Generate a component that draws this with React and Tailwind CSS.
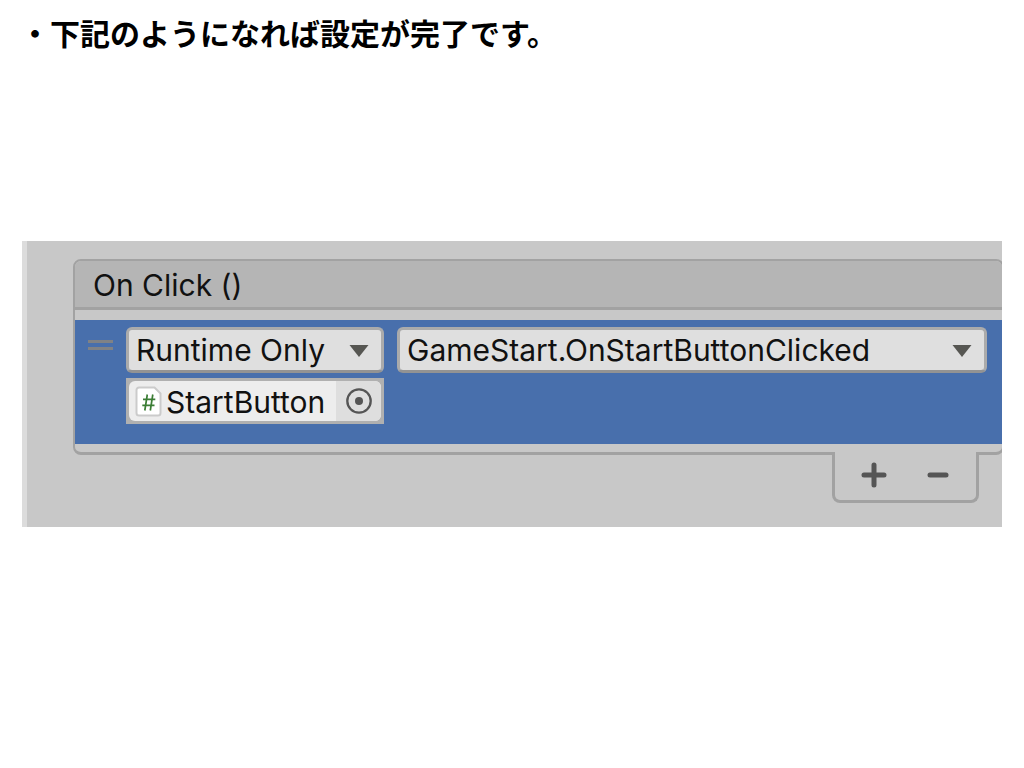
import { useState } from 'react';

function Dropdown({ label, options, className }) {
  return (
    <div className={`relative ${className}`}>
      <select
        aria-label={label}
        className="h-[46px] w-full appearance-none rounded-md border-[3px] border-[#ababab] border-b-[#939393] bg-[#dfdfdf] pr-12 pb-px pl-[7px] text-[30px] leading-9 text-[#111111]"
      >
        {options.map((option) => (
          <option key={option}>{option}</option>
        ))}
      </select>
      <svg
        viewBox="0 0 20 12"
        className="pointer-events-none absolute top-[18px] right-[15px] h-3 w-5"
        aria-hidden="true"
      >
        <path d="M0.500 0H19.500L10 12Z" fill="#565652" />
      </svg>
    </div>
  );
}

function ScriptIcon() {
  return (
    <svg viewBox="0 0 28 32" className="h-8 w-7 shrink-0" aria-hidden="true">
      <path
        d="M4 2.500H19.500L25.500 8.500V28A2.500 2.500 0 0 1 23 30.500H4A2.500 2.500 0 0 1 1.500 28V5A2.500 2.500 0 0 1 4 2.500Z"
        fill="#ffffff"
        stroke="#cbcbcb"
        strokeWidth="2"
      />
      <path
        d="M12.300 9.500L9.800 25.500M17.800 9.500L15.300 25.500M8 14.300H20.300M7.300 20.300H19.500"
        fill="none"
        stroke="#3b7d35"
        strokeWidth="1.700"
      />
    </svg>
  );
}

function ObjectField() {
  const [value, setValue] = useState('StartButton');
  return (
    <div className="h-[46px] w-[258px] bg-[#b0b0b0] p-[3px]">
      <div className="flex h-full overflow-hidden rounded-md bg-[#ededed]">
        <div className="flex min-w-0 flex-1 items-center gap-[3px] pl-1.5">
          <ScriptIcon />
          <input
            aria-label="Target object"
            value={value}
            onChange={(event) => setValue(event.target.value)}
            className="h-10 w-full min-w-0 bg-transparent pt-0.5 text-[30px] leading-9 text-[#111111] outline-none"
          />
        </div>
        <button
          type="button"
          aria-label="Select object"
          className="flex w-[45px] items-center justify-center bg-[#dedede]"
        >
          <svg viewBox="0 0 28 28" className="size-7" aria-hidden="true">
            <circle cx="14" cy="14" r="11.700" fill="none" stroke="#555555" strokeWidth="2.300" />
            <circle cx="14" cy="14" r="4" fill="#555555" />
          </svg>
        </button>
      </div>
    </div>
  );
}

function ListFooter() {
  return (
    <div className="relative -mt-[3px] mr-[25px] ml-auto flex h-[51px] w-[147px] rounded-b-lg border-x-[3px] border-b-[3px] border-[#a2a2a2] bg-[#c8c8c8] pb-0.5 pl-[7px]">
      <button type="button" aria-label="Add" className="flex w-16 items-center justify-center">
        <svg viewBox="0 0 26 26" className="size-[26px]" aria-hidden="true">
          <path d="M13 3V23M3 13H23" stroke="#555555" strokeWidth="5" strokeLinecap="round" />
        </svg>
      </button>
      <button type="button" aria-label="Remove" className="flex w-16 items-center justify-center">
        <svg viewBox="0 0 26 26" className="size-[26px]" aria-hidden="true">
          <path d="M5 13H21" stroke="#555555" strokeWidth="5" strokeLinecap="round" />
        </svg>
      </button>
    </div>
  );
}

export default function App() {
  return (
    <main className="grid min-h-screen grid-rows-[1fr_auto_1fr] bg-white px-[22px] font-['Inter',sans-serif] [font-optical-sizing:none]">
      <h1 className="-ml-0.5 pt-2.5 font-['Noto_Sans_CJK_JP',sans-serif] text-[30px] leading-[44px] font-bold text-black">
        ・下記のようになれば設定が完了です。
      </h1>
      <section
        aria-labelledby="event-name"
        className="overflow-hidden border-l-[5px] border-[#dcdcdc] bg-[#c8c8c8] pt-[18px] pb-6 pl-[46px]"
      >
        <div className="-mr-0.5">
          <div className="overflow-hidden rounded-lg border-2 border-b-[3px] border-[#a2a2a2] bg-[#c8c8c8]">
            <h2
              id="event-name"
              className="h-[49px] border-b-[3px] border-[#a2a2a2] bg-[#b5b5b5] pl-[18px] text-[30px] leading-[48px] text-[#111111]"
            >
              On Click ()
            </h2>
            <div className="mt-2.5 mb-2 flex h-[124px] bg-[#486fac] pt-[7px] pr-[15px] pl-[13px]">
              <div className="mt-[13px] h-2.5 w-[25px] shrink-0 border-y-[3px] border-[#808285]" />
              <div className="ml-[13px] min-w-0 flex-1">
                <div className="flex gap-[13px]">
                  <Dropdown
                    label="Call state"
                    options={['Runtime Only', 'Editor And Runtime', 'Off']}
                    className="w-[258px] shrink-0"
                  />
                  <Dropdown
                    label="Function"
                    options={['GameStart.OnStartButtonClicked', 'No Function']}
                    className="min-w-0 flex-1"
                  />
                </div>
                <div className="mt-[5px]">
                  <ObjectField />
                </div>
              </div>
            </div>
          </div>
          <ListFooter />
        </div>
      </section>
    </main>
  );
}
